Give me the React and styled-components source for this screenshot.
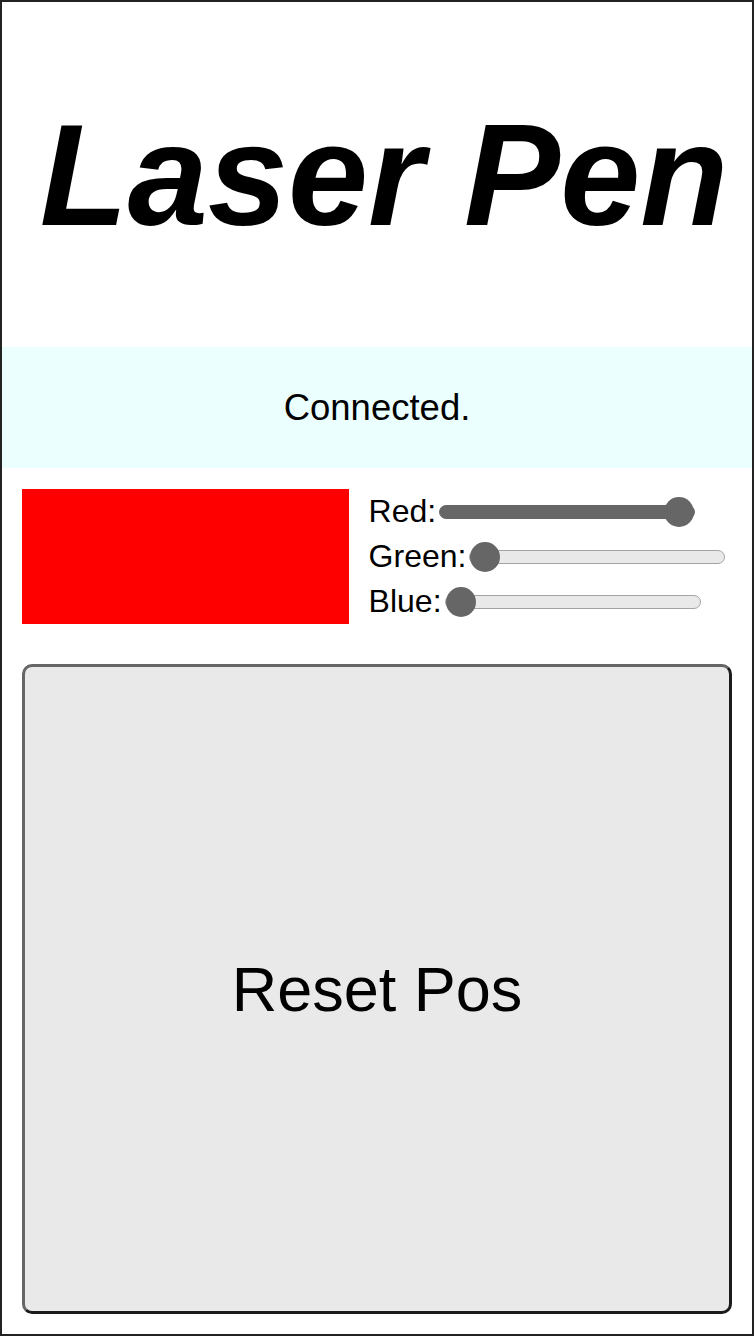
import React, { useState } from "react";
import styled, { createGlobalStyle } from "styled-components";

const GlobalStyle = createGlobalStyle`
  html, body {
    margin: 0;
    padding: 0;
    background: #fff;
  }
  body {
    font-family: "Liberation Sans", Arial, Helvetica, sans-serif;
  }
`;

function Slider({ label, value, onChange }) {
  const pct = (value / 255) * 100;
  return (
    <SliderRow>
      <SliderLabel>{label}:</SliderLabel>
      <Range
        type="range"
        min="0"
        max="255"
        value={value}
        $filled={value > 0}
        style={{ "--fill": `${pct}%` }}
        onChange={(e) => onChange(Number(e.target.value))}
      />
    </SliderRow>
  );
}

export default function App() {
  const [red, setRed] = useState(255);
  const [green, setGreen] = useState(0);
  const [blue, setBlue] = useState(0);

  return (
    <>
      <GlobalStyle />
      <Page>
        <Header>
          <Title>Laser Pen</Title>
        </Header>
        <Status>Connected.</Status>
        <Content>
          <ColorRow>
            <Swatch style={{ background: `rgb(${red}, ${green}, ${blue})` }} />
            <Sliders>
              <Slider label="Red" value={red} onChange={setRed} />
              <Slider label="Green" value={green} onChange={setGreen} />
              <Slider label="Blue" value={blue} onChange={setBlue} />
            </Sliders>
          </ColorRow>
          <ResetButton type="button">Reset Pos</ResetButton>
        </Content>
      </Page>
    </>
  );
}

const Page = styled.div`
  box-sizing: border-box;
  width: 754px;
  height: 1336px;
  border: 2px solid #222;
  display: flex;
  flex-direction: column;
  overflow: hidden;
`;

const Header = styled.header`
  height: 345px;
  display: flex;
  align-items: center;
  justify-content: center;
  padding: 3px 0 0 14px;
  box-sizing: border-box;
`;

const Title = styled.h1`
  margin: 0;
  font-family: "Liberation Sans", Arial, sans-serif;
  font-size: 144px;
  font-weight: 700;
  font-style: italic;
  line-height: 1;
  color: #000;
  white-space: nowrap;
`;

const Status = styled.div`
  height: 121px;
  background: #ebffff;
  display: flex;
  align-items: center;
  justify-content: center;
  font-size: 36.5px;
  color: #000;
`;

const Content = styled.main`
  flex: 1;
  display: flex;
  flex-direction: column;
  padding: 21px 20px 20px;
  min-height: 0;
`;

const ColorRow = styled.div`
  display: flex;
  gap: 20px;
`;

const Swatch = styled.div`
  width: 46%;
  height: 135px;
  flex-shrink: 0;
`;

const Sliders = styled.div`
  display: flex;
  flex-direction: column;
`;

const SliderRow = styled.div`
  height: 45px;
  display: flex;
  align-items: center;
`;

const SliderLabel = styled.span`
  font-size: 32px;
  color: #000;
  margin-right: 3px;
`;

const Range = styled.input`
  -webkit-appearance: none;
  appearance: none;
  width: 256px;
  height: 30px;
  margin: 0;
  padding: 0;
  background: transparent;

  &::-webkit-slider-runnable-track {
    box-sizing: border-box;
    height: 14px;
    border-radius: 7px;
    border: 1px solid ${(p) => (p.$filled ? "#666" : "#a3a3a3")};
    background: linear-gradient(
      to right,
      #666 var(--fill),
      #e9e9e9 var(--fill)
    );
  }

  &::-webkit-slider-thumb {
    -webkit-appearance: none;
    appearance: none;
    width: 30px;
    height: 30px;
    margin-top: -9px;
    border-radius: 50%;
    background: #666;
    border: none;
  }
`;

const ResetButton = styled.button`
  flex: 1;
  margin-top: 40px;
  box-sizing: border-box;
  width: 100%;
  border: 3px solid;
  border-color: #666 #1c1c1c #1c1c1c #666;
  border-radius: 10px;
  background: #e9e9e9;
  font-family: "Liberation Sans", Arial, sans-serif;
  font-size: 63px;
  color: #000;
  cursor: pointer;
`;
